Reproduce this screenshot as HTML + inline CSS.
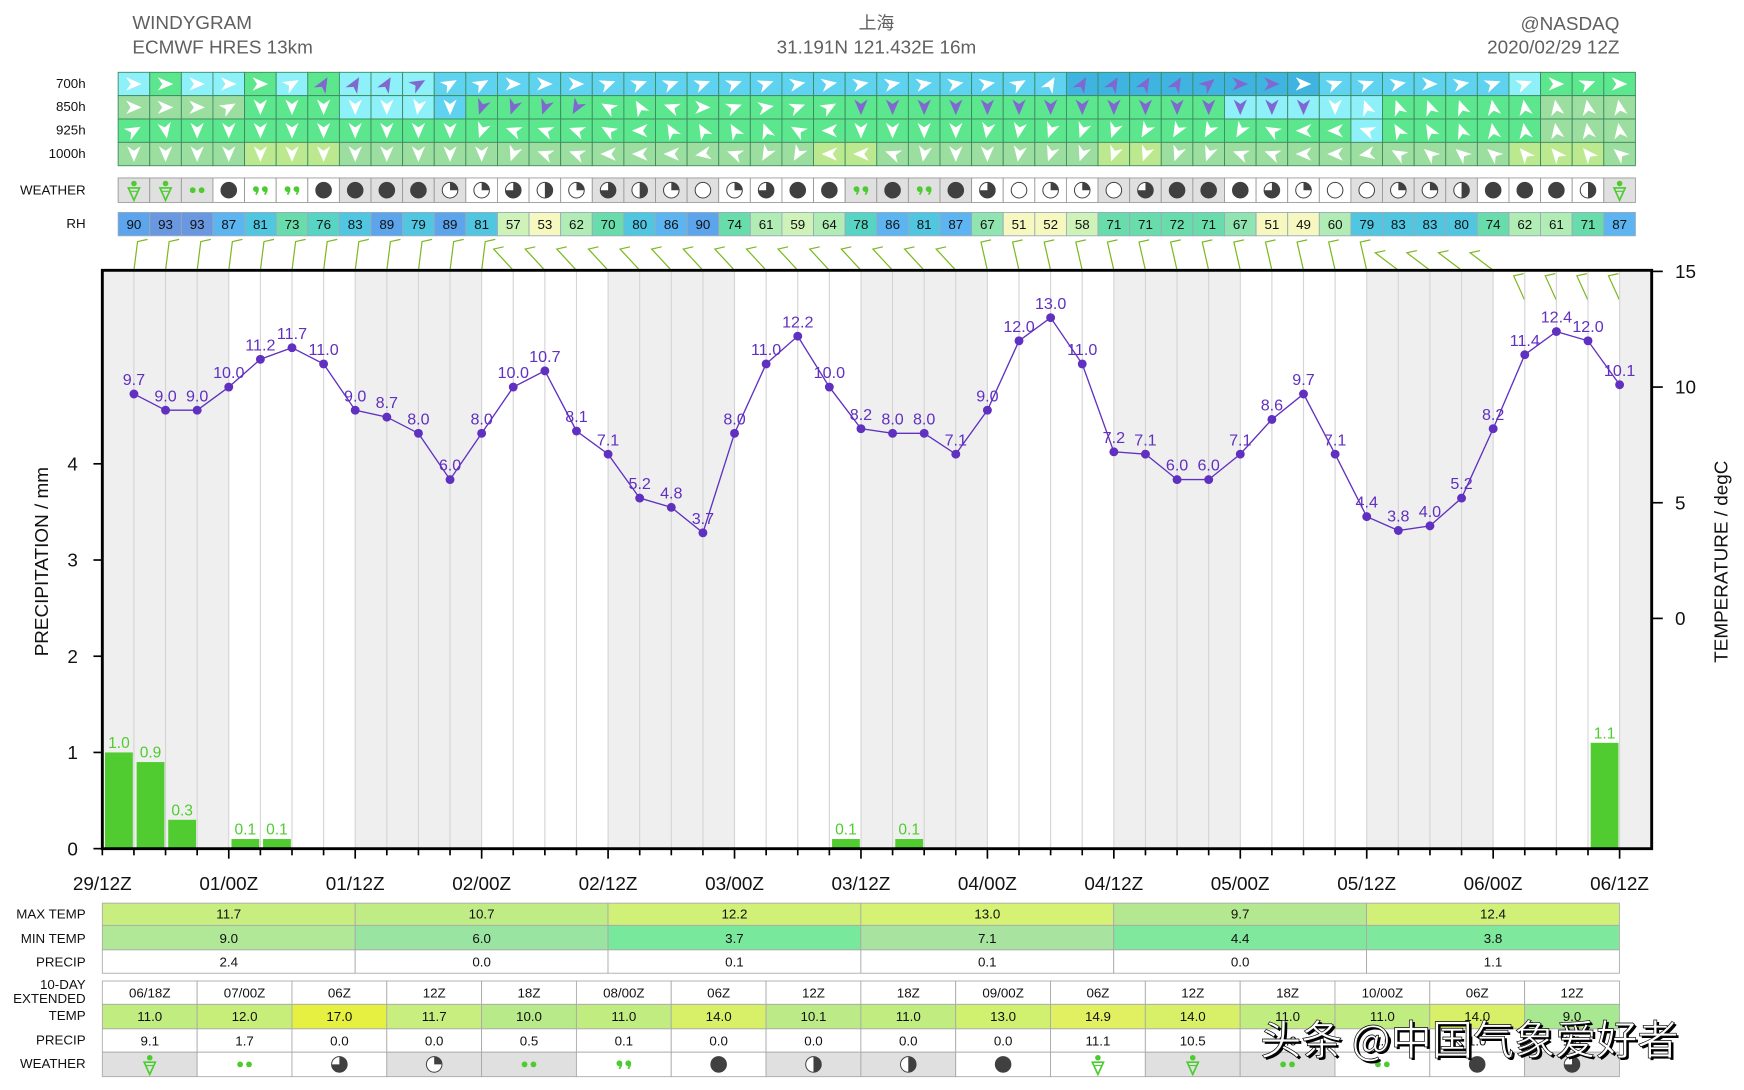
<!DOCTYPE html>
<html><head><meta charset="utf-8"><style>
html,body{margin:0;padding:0;background:#fff;overflow:hidden}
svg{display:block;font-family:"Liberation Sans","Noto Sans CJK SC",sans-serif}
</style></head><body>
<svg id="s" width="1744" height="1090" viewBox="0 0 1568 980" preserveAspectRatio="none" xmlns="http://www.w3.org/2000/svg">
<rect width="1568" height="980" fill="#fff"/>
<g fill="#606060" font-size="17">
<text x="119" y="26">WINDYGRAM</text>
<text x="119" y="48">ECMWF HRES 13km</text>
<text x="788" y="26" text-anchor="middle" font-family="Noto Sans CJK SC, sans-serif" font-size="16">上海</text>
<text x="788" y="48" text-anchor="middle">31.191N 121.432E 16m</text>
<text x="1456" y="27" text-anchor="end">@NASDAQ</text>
<text x="1456" y="48" text-anchor="end">2020/02/29 12Z</text>
</g>
<g id="g"></g>
</svg>
<script>
var h="";
function X(i){return 92+28.42*(i+1);}
function r(x,y,w,hh,f,st){h+='<rect x="'+x+'" y="'+y+'" width="'+w+'" height="'+hh+'" fill="'+f+'"'+(st?' stroke="'+st+'" stroke-width="0.8"':'')+'/>';}
function t(x,y,s,sz,f,a,ex){h+='<text x="'+x+'" y="'+y+'" font-size="'+sz+'" fill="'+f+'" text-anchor="'+(a||'middle')+'" '+(ex||'')+'>'+s+'</text>';}
var rows=[
"cgccgcgcccCCCCCCCCCCCCCCCCCCCCBBBBBBBBCCCCCCcgg",
"llllgggcccCggggggggggggggggggggggggcccccggggglll",
"gggggggggggggggggggggggggggggggggggggggcggggglll",
"llllyyylllllllllllllllyylllllllyylllllllllllyyyl"];
var pal={c:"#8ef0f8",C:"#5fd2ef",B:"#3fb4e0",g:"#5ce68e",l:"#9cdea0",y:"#bce890"};
var ang=[
[0,0,0,0,0,-30,-60,-60,-60,-30,-30,-30,0,0,0,-20,-20,-20,-20,-20,-20,-10,-10,-10,-10,-10,-10,-10,-30,-60,-60,-60,-60,-60,-40,0,0,0,-20,-20,-10,0,-10,-20,-20,0,-20],
[0,0,0,-30,90,90,90,90,90,100,90,110,110,110,120,-150,-120,-160,0,-20,-10,-20,-30,90,90,90,90,90,90,90,90,90,90,90,90,90,90,90,90,-110,-110,-110,-110,-100,-100,-100,-100,-100],
[-30,80,90,90,90,90,90,90,90,90,90,110,-160,-160,-160,-150,180,-120,-120,-120,-110,-150,180,90,90,90,90,100,100,110,110,110,120,120,120,120,-150,180,180,-160,-120,-120,-110,-100,-100,-100,-100,-100],
[90,90,90,90,90,90,90,90,90,90,90,90,110,-160,-160,180,180,180,170,-160,120,120,180,180,-160,100,90,90,100,110,110,110,110,110,110,-160,-160,180,180,170,-150,-140,-140,-140,-130,-130,-130,-140]];
var ry=[65,86,107,128],lab=["700h","850h","925h","1000h"];
for(var k=0;k<4;k++){t(77,ry[k]+14,lab[k],12,"#111","end");
 for(var i=0;i<48;i++){var x=X(i)-14.21;r(x,ry[k],28.42,21,pal[rows[k][i]]||"#5ce68e","#3d8a60");
  var a=ang[k][i]||0,col=(k==0&&i>=6&&i<=9)||(k==0&&i>=30&&i<=36)||(k==1&&i>=11&&i<=14)||(k==1&&i>=23&&i<=37)?"#8068d0":"#fff";
  h+='<path transform="translate('+(X(i))+','+(ry[k]+10.5)+') rotate('+a+')" d="M-7,-6 L7,0 L-7,6 L-3,0 Z" fill="'+col+'"/>';}}
var wx="SSDFCCFFFFqqtHqtHqOqtFFCFCFtOqqOtFFFtqOOqqHFFFHS";
function icon(c,x,y){
 if(c=="S"){h+='<circle cx="'+x+'" cy="'+(y-6)+'" r="2.5" fill="#4ccc30"/><path d="M'+(x-5)+','+(y-2)+'L'+(x+5)+','+(y-2)+'L'+x+','+(y+9)+'Z" fill="none" stroke="#4ccc30" stroke-width="1.5"/><line x1="'+(x-4)+'" y1="'+(y+1)+'" x2="'+(x+4)+'" y2="'+(y+1)+'" stroke="#4ccc30"/>';return;}
 if(c=="D"){h+='<circle cx="'+(x-4)+'" cy="'+y+'" r="2.6" fill="#4ccc30"/><circle cx="'+(x+4)+'" cy="'+y+'" r="2.6" fill="#4ccc30"/>';return;}
 if(c=="C"){h+='<circle cx="'+(x-4)+'" cy="'+(y-1)+'" r="2.6" fill="#4ccc30"/><circle cx="'+(x+4)+'" cy="'+(y-1)+'" r="2.6" fill="#4ccc30"/><path d="M'+(x-2)+','+y+'l-2,4M'+(x+6)+','+y+'l-2,4" stroke="#4ccc30" stroke-width="1.6"/>';return;}
 var R=7,f={F:1,O:0,q:.25,H:.5,t:.75}[c];
 h+='<circle cx="'+x+'" cy="'+y+'" r="'+R+'" fill="'+(f==1?"#404040":"#fff")+'" stroke="#404040" stroke-width="0.9"/>';
 if(f>0&&f<1){var e=f*2*Math.PI,ex=x+R*Math.sin(e),ey=y-R*Math.cos(e);
  h+='<path d="M'+x+','+y+'L'+x+','+(y-R)+'A'+R+','+R+' 0 '+(f>.5?1:0)+' 1 '+ex+','+ey+'Z" fill="#404040"/>';}
}
t(77,175,"WEATHER",12,"#111","end");
for(var i=0;i<48;i++){var kk=Math.floor((i+1)/4);r(X(i)-14.21,160,28.42,22,kk%2==0?"#e0e0e0":"#fff","#999");icon(wx[i],X(i),171);}
var rh=[90,93,93,87,81,73,76,83,89,79,89,81,57,53,62,70,80,86,90,74,61,59,64,78,86,81,87,67,51,52,58,71,71,72,71,67,51,49,60,79,83,83,80,74,62,61,71,87];
function rhc(v){if(v>=92)return"#6a98e0";if(v>=88)return"#5ca4ec";if(v>=84)return"#5cb4f0";if(v>=79)return"#50c6e0";if(v>=76)return"#58d4c4";if(v>=70)return"#68dcaa";if(v>=65)return"#90e4b0";if(v>=60)return"#b0ecb4";if(v>=55)return"#cef2b8";return"#f6f8c0";}
t(77,205,"RH",12,"#111","end");
for(var i=0;i<48;i++){r(X(i)-14.21,191,28.42,21,rhc(rh[i]),"#9ab");t(X(i),206,rh[i],12,"#111");}
for(var i=0;i<48;i++){var x=X(i),y0=i>43?270:243,a=(i<12?-10:(i<27?-60:(i<40?-30:(i<44?-70:-30))));
 var rad=a*Math.PI/180,x2=x+26*Math.sin(rad+0.3),y2=y0-26*Math.cos(rad+0.3);
 if(i>43){x2=x-10;y2=y0-22;}
 h+='<path d="M'+x+','+y0+'L'+x2+','+y2+'l9,-2" fill="none" stroke="#7cb820" stroke-width="1.1"/>';}
for(var k=0;k<13;k++){var x=92+113.67*k,w=Math.min(113.67,1485-x);if(k%2==0)r(x,243,w,520,"#efefef");}
for(var i=0;i<48;i++)h+='<line x1="'+X(i)+'" y1="243" x2="'+X(i)+'" y2="763" stroke="#d4d4d4" stroke-width="1"/>';
var pr={0:1.0,1:0.9,2:0.3,4:0.1,5:0.1,23:0.1,25:0.1,47:1.1};
for(var i in pr){i=+i;var ph=pr[i]*86.5,x=X(i)-26;r(x,763-ph,25,ph,"#50cc30");t(x+12.5,763-ph-4,pr[i].toFixed(1),14,"#50cc30");}
var T=[9.7,9.0,9.0,10.0,11.2,11.7,11.0,9.0,8.7,8.0,6.0,8.0,10.0,10.7,8.1,7.1,5.2,4.8,3.7,8.0,11.0,12.2,10.0,8.2,8.0,8.0,7.1,9.0,12.0,13.0,11.0,7.2,7.1,6.0,6.0,7.1,8.6,9.7,7.1,4.4,3.8,4.0,5.2,8.2,11.4,12.4,12.0,10.1];
var pts=[];for(var i=0;i<48;i++)pts.push(X(i).toFixed(1)+','+(556-20.8*T[i]).toFixed(1));
h+='<polyline points="'+pts.join(' ')+'" fill="none" stroke="#6030c0" stroke-width="1.2"/>';
for(var i=0;i<48;i++){var y=556-20.8*T[i];h+='<circle cx="'+X(i)+'" cy="'+y+'" r="4" fill="#6030c0"/>';t(X(i),y-8,T[i].toFixed(1),14.5,"#6030c0");}
h+='<path d="M92,243H1485V763H92Z" fill="none" stroke="#000" stroke-width="2.6"/>';
for(var i=-1;i<48;i++)h+='<line x1="'+X(i)+'" y1="763" x2="'+X(i)+'" y2="'+(i%4==3?772:769)+'" stroke="#000" stroke-width="1.5"/>';
var xl=["29/12Z","01/00Z","01/12Z","02/00Z","02/12Z","03/00Z","03/12Z","04/00Z","04/12Z","05/00Z","05/12Z","06/00Z","06/12Z"];
for(var k=0;k<13;k++)t(92+113.67*k,800,xl[k],17,"#111");
for(var p=0;p<5;p++){var y=763-86.5*p;h+='<line x1="84" y1="'+y+'" x2="92" y2="'+y+'" stroke="#000" stroke-width="1.5"/>';t(70,y+6,p,17,"#111","end");}
for(var q=0;q<4;q++){var v=15-5*q,y=556-20.8*v;h+='<line x1="1485" y1="'+y+'" x2="1495" y2="'+y+'" stroke="#000" stroke-width="1.5"/>';t(1506,y+6,v,17,"#111","start");}
t(0,0,"PRECIPITATION / mm",17,"#111","middle",'transform="translate(43,505) rotate(-90)"');
t(0,0,"TEMPERATURE / degC",17,"#111","middle",'transform="translate(1553,505) rotate(-90)"');
var cw=227.33,mx=["11.7","10.7","12.2","13.0","9.7","12.4"],mxc=["#c8ee80","#c0ec86","#d0f078","#d6f274","#b4e890","#d0f078"],
mn=["9.0","6.0","3.7","7.1","4.4","3.8"],mnc=["#b0e898","#98e4a0","#78e89c","#a8e4a0","#80e89c","#7ee89c"],pp=["2.4","0.0","0.1","0.1","0.0","1.1"];
t(77,826,"MAX TEMP",12,"#111","end");t(77,848,"MIN TEMP",12,"#111","end");t(77,869,"PRECIP",12,"#111","end");
for(var k=0;k<6;k++){var x=92+cw*k;r(x,812,cw,20,mxc[k],"#aaa");t(x+cw/2,826,mx[k],12,"#111");
 r(x,832,cw,22,mnc[k],"#aaa");t(x+cw/2,848,mn[k],12,"#111");r(x,854,cw,21,"#fff","#aaa");t(x+cw/2,869,pp[k],12,"#111");}
var ew=85.25,eh=["06/18Z","07/00Z","06Z","12Z","18Z","08/00Z","06Z","12Z","18Z","09/00Z","06Z","12Z","18Z","10/00Z","06Z","12Z"],
et=["11.0","12.0","17.0","11.7","10.0","11.0","14.0","10.1","11.0","13.0","14.9","14.0","11.0","11.0","14.0","9.0"],
etc_=["#c0ec80","#c8ee7a","#e6f040","#c8ee80","#b8ea8a","#c0ec80","#d8f068","#bcea86","#c0ec80","#d0f070","#e0f060","#d8f068","#c0ec80","#c0ec80","#d8f068","#a8e890"],
ep=["9.1","1.7","0.0","0.0","0.5","0.1","0.0","0.0","0.0","0.0","11.1","10.5","1.0","1.0","1.0","1.0"],ewx="SDtqDCFHHFSSDDFt";
t(77,889,"10-DAY",12,"#111","end");t(77,902,"EXTENDED",12,"#111","end");t(77,917,"TEMP",12,"#111","end");t(77,939,"PRECIP",12,"#111","end");t(77,960,"WEATHER",12,"#111","end");
for(var k=0;k<16;k++){var x=92+ew*k,cx=x+ew/2,gr=(k%4==0||k%4==3);
 r(x,882,ew,21,"#fff","#aaa");t(cx,897,eh[k],12,"#111");r(x,903,ew,22,etc_[k],"#aaa");t(cx,918,et[k],12,"#111");
 r(x,925,ew,21,"#fff","#aaa");t(cx,940,ep[k],12,"#111");r(x,946,ew,22,gr?"#e0e0e0":"#fff","#aaa");icon(ewx[k],cx,957);}
t(1133,948,"头条 @中国气象爱好者",37,"#000","start",'font-family="Noto Sans CJK SC, sans-serif" dx="2" dy="2"');
t(1133,948,"头条 @中国气象爱好者",37,"#fff","start",'font-family="Noto Sans CJK SC, sans-serif" stroke="#000" stroke-width="0.6"');
document.getElementById("g").innerHTML=h;
</script>
</body></html>
